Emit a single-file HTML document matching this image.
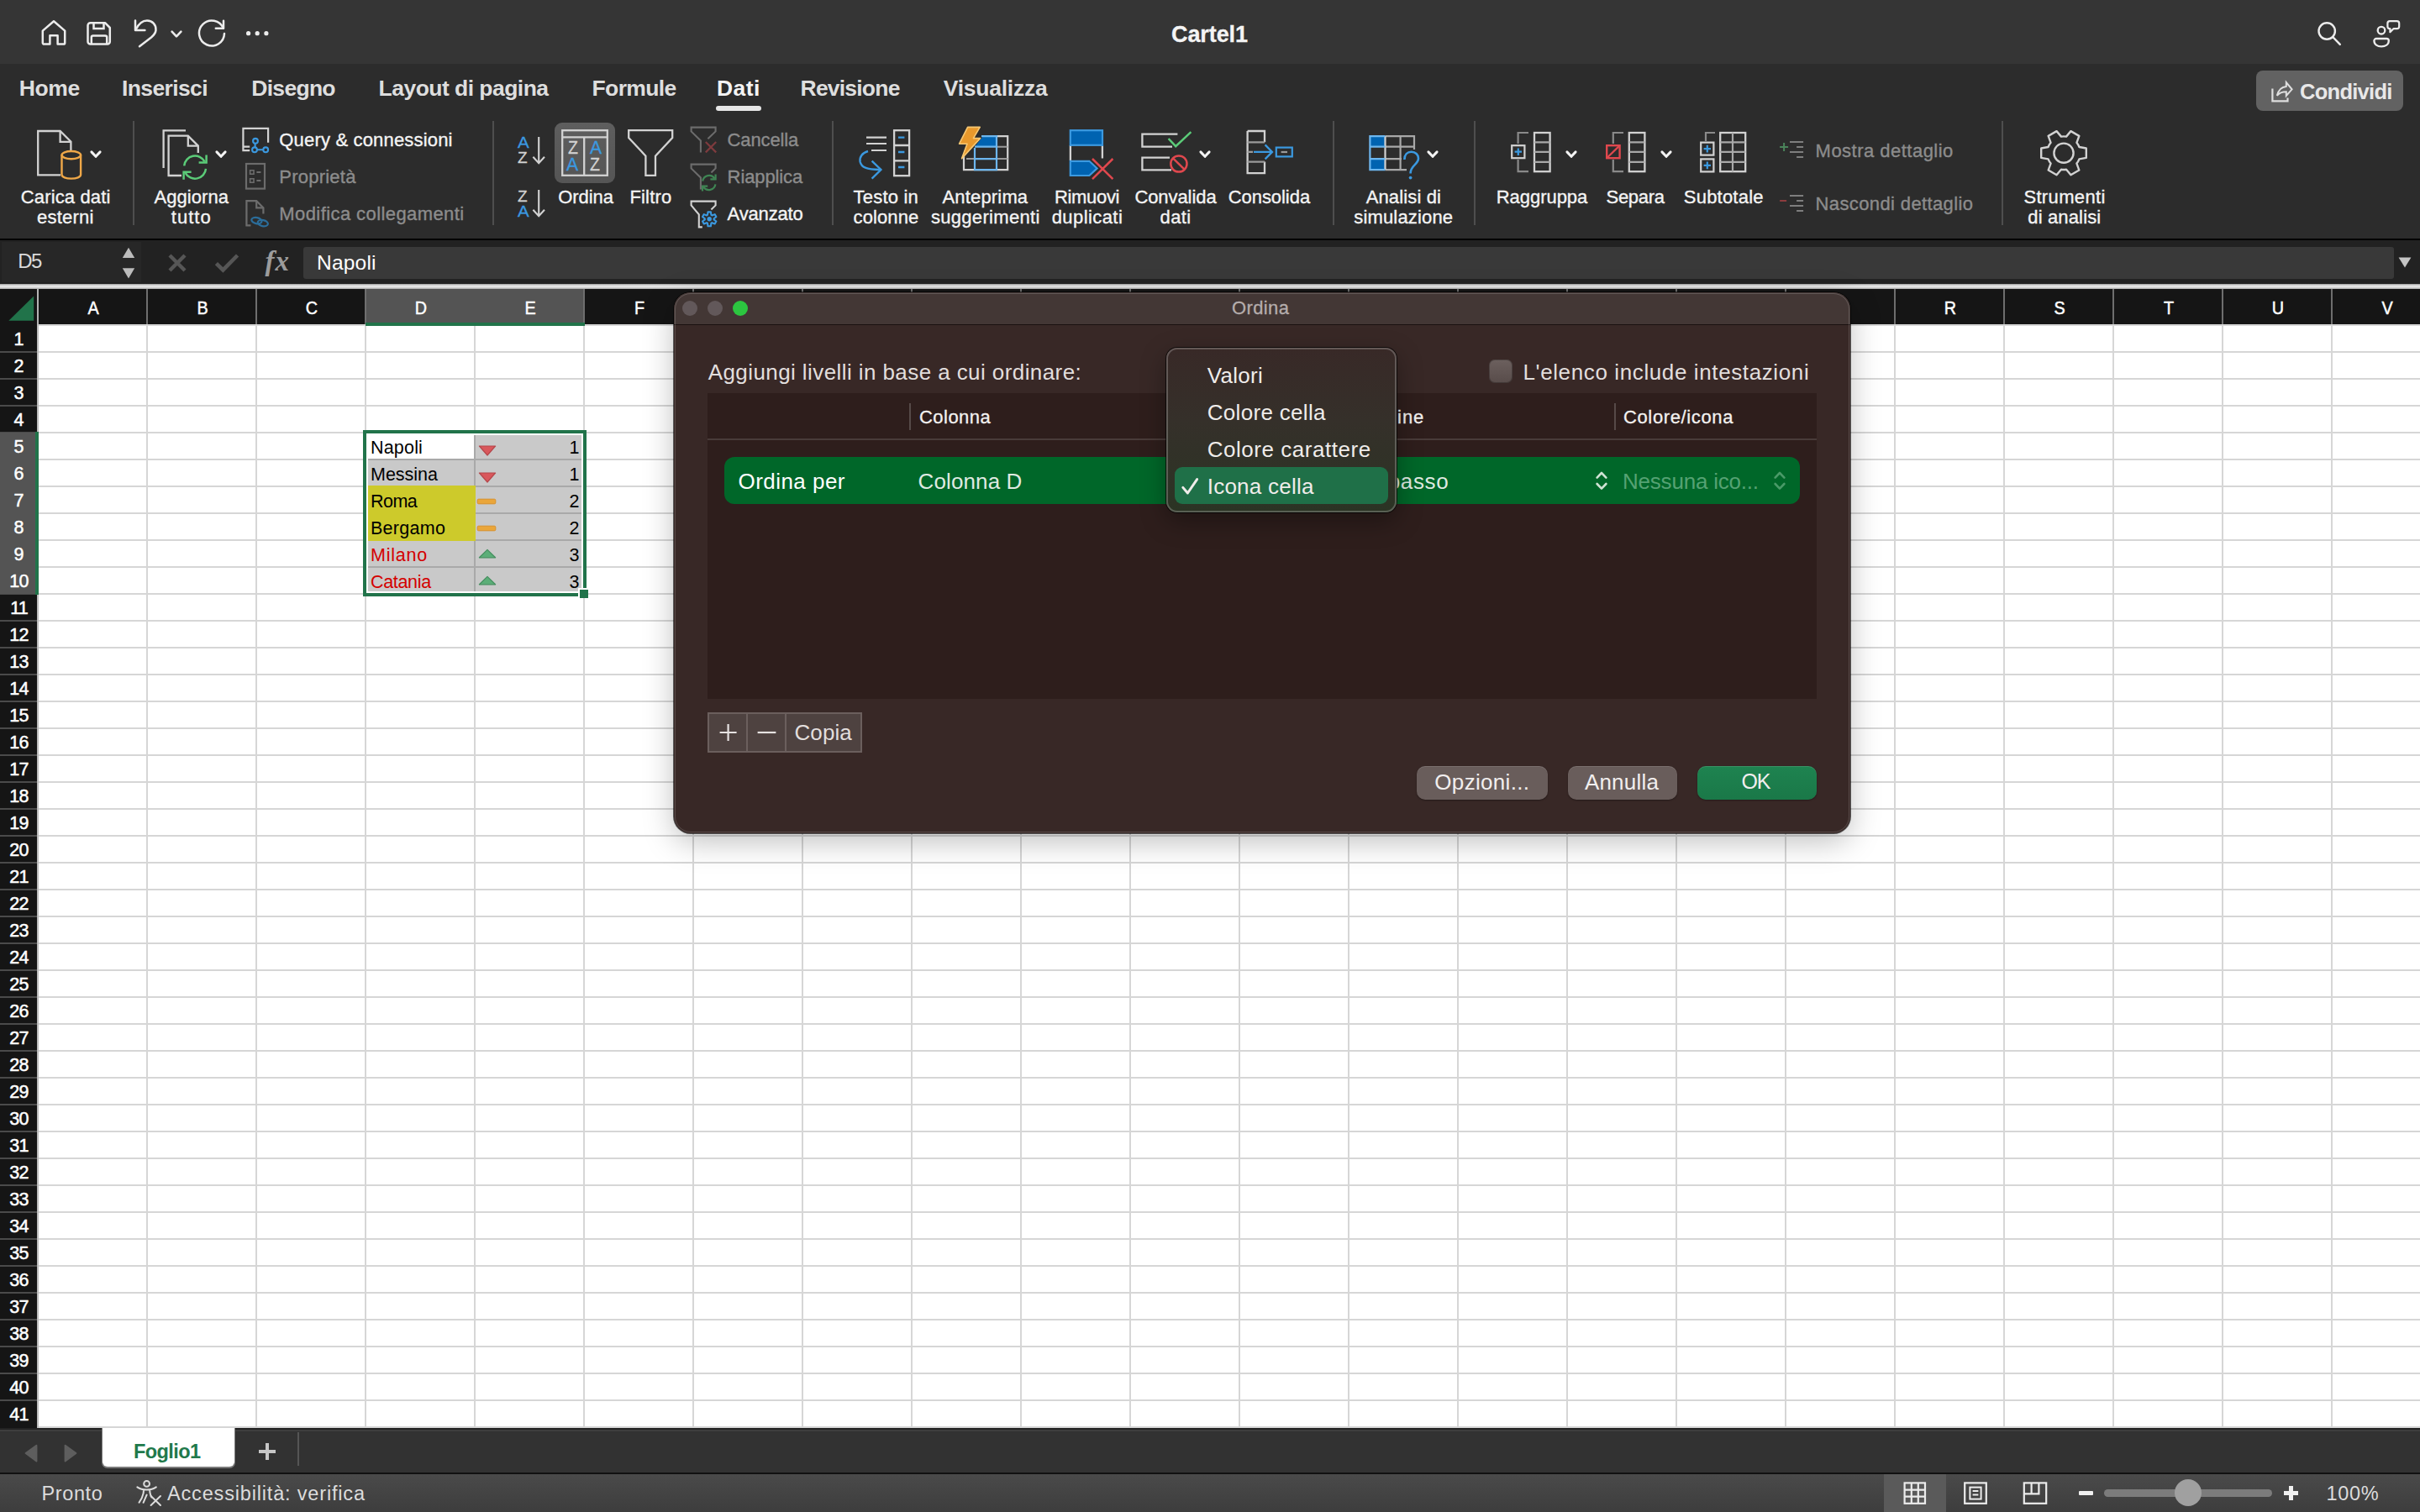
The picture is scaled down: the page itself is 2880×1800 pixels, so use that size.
<!DOCTYPE html>
<html lang="it"><head><meta charset="utf-8"><title>Cartel1</title><style>
html,body{margin:0;padding:0;background:#2c2c2c;}
body{width:2880px;height:1800px;position:relative;overflow:hidden;font-family:"Liberation Sans",sans-serif;}
.b{position:absolute;display:block;}
.t{position:absolute;white-space:nowrap;margin:0;padding:0;font-family:"Liberation Sans",sans-serif;font-weight:400;}
.sf{font-family:"Liberation Serif",serif;}
</style></head>
<body>
<!-- part1 -->
<div class="b" style="left:0px;top:0px;width:2880px;height:76px;background:#353535;"></div>
<div class="b" style="left:0px;top:76px;width:2880px;height:208px;background:#2c2c2c;"></div>
<svg class="b" style="left:48px;top:22px;" width="32" height="34" viewBox="0 0 32 34" fill="none"><path d="M2.8 14.6 L16 3.2 L29.2 14.6 V29 a1.6 1.6 0 0 1 -1.6 1.6 H20.6 V20.2 H11.4 V30.6 H4.4 a1.6 1.6 0 0 1 -1.6 -1.6 Z" stroke="#ececec" stroke-width="2.5" stroke-linejoin="round"/></svg>
<svg class="b" style="left:102px;top:24px;" width="32" height="32" viewBox="0 0 32 32" fill="none"><path d="M5.5 3.2 H23 L28.8 9 V25.5 a3 3 0 0 1 -3 3 H5.5 a3 3 0 0 1 -3 -3 V6.2 a3 3 0 0 1 3 -3 Z" stroke="#ececec" stroke-width="2.5" stroke-linejoin="round"/><path d="M9.5 3.5 V10 H21.5 V3.5" stroke="#ececec" stroke-width="2.5"/><path d="M6.8 28 V20.5 a2 2 0 0 1 2 -2 H23.2 a2 2 0 0 1 2 2 V28" stroke="#ececec" stroke-width="2.5"/></svg>
<svg class="b" style="left:156px;top:20px;" width="36" height="40" viewBox="0 0 36 40" fill="none"><path d="M5 4.6 V16 H16.4" stroke="#ececec" stroke-width="2.5" stroke-linecap="round" stroke-linejoin="round"/><path d="M5.6 15.2 C9 8.5 14 4.6 19 4.6 C25.5 4.6 30 9.5 29.5 16 C29 20 27 22 24 24.5 L10 35.2" stroke="#ececec" stroke-width="2.5" stroke-linecap="round"/></svg>
<svg class="b" style="left:202px;top:34px;" width="16" height="14" viewBox="0 0 16 14" fill="none"><path d="M2.6 3.6 L8 9.4 L13.4 3.6" stroke="#ececec" stroke-width="2.6" stroke-linecap="round" stroke-linejoin="round"/></svg>
<svg class="b" style="left:232px;top:20px;" width="40" height="40" viewBox="0 0 40 40" fill="none"><path d="M33.8 13.6 A15 15 0 1 0 35 20" stroke="#ececec" stroke-width="2.5" stroke-linecap="round"/><path d="M34 4.8 V13.8 H24.8" stroke="#ececec" stroke-width="2.5" stroke-linecap="round" stroke-linejoin="round"/></svg>
<svg class="b" style="left:290px;top:34px;" width="32" height="12" viewBox="0 0 32 12" fill="none"><circle cx="5.6" cy="5.7" r="2.6" fill="#ececec"/><circle cx="16.2" cy="5.7" r="2.6" fill="#ececec"/><circle cx="26.9" cy="5.7" r="2.6" fill="#ececec"/></svg>
<div id="t1" class="t" style="top:27.64px;font-size:27px;line-height:27px;color:#f4f4f4;font-weight:700;letter-spacing:-0.085px;left:839.46px;width:1200px;text-align:center;-webkit-text-stroke:0.3px currentColor;"><span>Cartel1</span></div>
<svg class="b" style="left:2754px;top:22px;" width="36" height="36" viewBox="0 0 36 36" fill="none"><circle cx="15.2" cy="15" r="9.7" stroke="#ececec" stroke-width="2.4"/><path d="M22.2 22 L30.8 30.8" stroke="#ececec" stroke-width="2.5" stroke-linecap="round"/></svg>
<svg class="b" style="left:2820px;top:20px;" width="40" height="40" viewBox="0 0 40 40" fill="none"><circle cx="14" cy="16.2" r="4.3" stroke="#ececec" stroke-width="2.3"/><path d="M5.4 28.6 a2.6 2.6 0 0 1 2.6 -2.6 H20.2 a2.6 2.6 0 0 1 2.6 2.6 c0 4.4 -3.9 6.8 -8.7 6.8 c-4.8 0 -8.7 -2.4 -8.7 -6.8 Z" stroke="#ececec" stroke-width="2.3"/><path d="M24 5.2 H32.6 a2.6 2.6 0 0 1 2.6 2.6 V11.6 a2.6 2.6 0 0 1 -2.6 2.6 H28.4 L24.4 18.2 V14.2 H24 a2.6 2.6 0 0 1 -2.6 -2.6 V7.8 a2.6 2.6 0 0 1 2.6 -2.6 Z" stroke="#ececec" stroke-width="2.2" stroke-linejoin="round"/></svg>
<div id="t2" class="t" style="top:91.77px;font-size:26.5px;line-height:26.5px;color:#dedede;font-weight:700;letter-spacing:-0.411px;left:22.80px;"><span>Home</span></div>
<div id="t3" class="t" style="top:91.77px;font-size:26.5px;line-height:26.5px;color:#dedede;font-weight:700;letter-spacing:-0.630px;left:145.00px;"><span>Inserisci</span></div>
<div id="t4" class="t" style="top:91.77px;font-size:26.5px;line-height:26.5px;color:#dedede;font-weight:700;letter-spacing:-0.715px;left:299.30px;"><span>Disegno</span></div>
<div id="t5" class="t" style="top:91.77px;font-size:26.5px;line-height:26.5px;color:#dedede;font-weight:700;letter-spacing:-0.538px;left:450.60px;"><span>Layout di pagina</span></div>
<div id="t6" class="t" style="top:91.77px;font-size:26.5px;line-height:26.5px;color:#dedede;font-weight:700;letter-spacing:-0.623px;left:704.50px;"><span>Formule</span></div>
<div id="t7" class="t" style="top:91.77px;font-size:26.5px;line-height:26.5px;color:#dedede;font-weight:700;letter-spacing:-0.800px;left:952.60px;"><span>Revisione</span></div>
<div id="t8" class="t" style="top:91.77px;font-size:26.5px;line-height:26.5px;color:#dedede;font-weight:700;letter-spacing:-0.252px;left:1122.80px;"><span>Visualizza</span></div>
<div id="t9" class="t" style="top:91.77px;font-size:26.5px;line-height:26.5px;color:#f4f4f4;font-weight:700;letter-spacing:0.407px;left:853.00px;"><span>Dati</span></div>
<div class="b" style="left:852px;top:126px;width:54px;height:6px;background:#e6e6e6;border-radius:3px;"></div>
<div class="b" style="left:2685px;top:84px;width:175px;height:48px;background:#626262;border-radius:8px;"></div>
<svg class="b" style="left:2699px;top:92.5px;" width="34" height="32" viewBox="0 0 34 32" fill="none"><path d="M5.4 12.6 V27.4 H23.5 V23.4" stroke="#dedede" stroke-width="2.2"/><path d="M10.8 20.8 C12.4 14.4 16 10.4 21.8 9.9 V5 L28.6 13.3 L21.8 21 V16.2 C17.2 16.2 13.6 17.4 10.8 20.8 Z" stroke="#dedede" stroke-width="2" stroke-linejoin="miter"/></svg>
<div id="t10" class="t" style="top:96.81px;font-size:25.5px;line-height:25.5px;color:#e8e8e8;font-weight:700;letter-spacing:-0.725px;left:2737.00px;"><span>Condividi</span></div>
<!-- part2a -->
<svg class="b" style="left:40px;top:150px;" width="64" height="68" viewBox="0 0 64 68" fill="none"><path d="M32 58.4 H5.2 V6 H31.6 L44.4 18.8 V29" stroke="#d2d2d2" stroke-width="2.3"/><path d="M31.6 6 V18.8 H44.4" stroke="#d2d2d2" stroke-width="2.3"/><ellipse cx="44.8" cy="34.6" rx="11.3" ry="4.6" stroke="#f0a848" stroke-width="2.4"/><path d="M33.5 34.6 V58 C33.5 60.6 38.5 62.6 44.8 62.6 C51.1 62.6 56.1 60.6 56.1 58 V34.6" stroke="#f0a848" stroke-width="2.4"/></svg>
<svg class="b" style="left:106px;top:176.5px;" width="16" height="14" viewBox="0 0 16 14" fill="none"><path d="M2.9 3.9 L8 9.3 L13.1 3.9" stroke="#f4f4f4" stroke-width="3" stroke-linecap="round" stroke-linejoin="round"/></svg>
<div id="t11" class="t" style="top:223.88px;font-size:22px;line-height:22px;color:#f4f4f4;letter-spacing:0.137px;left:24.80px;-webkit-text-stroke:0.35px currentColor;"><span>Carica dati</span></div>
<div id="t12" class="t" style="top:248.28px;font-size:22px;line-height:22px;color:#f4f4f4;letter-spacing:0.224px;left:44.10px;-webkit-text-stroke:0.35px currentColor;"><span>esterni</span></div>
<div class="b" style="left:158px;top:144px;width:2px;height:124px;background:#4e4e4e;"></div>
<svg class="b" style="left:190px;top:150px;" width="64" height="68" viewBox="0 0 64 68" fill="none"><path d="M4.6 50 V5.4 H31" stroke="#d2d2d2" stroke-width="2.3"/><path d="M26 59 H10.6 V11.6 H33.8 L45.8 23.6 V32" stroke="#d2d2d2" stroke-width="2.3"/><path d="M33.8 11.6 V23.6 H45.8" stroke="#d2d2d2" stroke-width="2.3"/><path d="M29.2 47.4 A13 13 0 0 1 53.6 42.4" stroke="#5bcb78" stroke-width="2.5"/><path d="M55.6 34.4 V43.4 H46.6" stroke="#5bcb78" stroke-width="2.5"/><path d="M55 50.8 A13 13 0 0 1 30.6 55.8" stroke="#5bcb78" stroke-width="2.5"/><path d="M28.6 63.8 V54.8 H37.6" stroke="#5bcb78" stroke-width="2.5"/></svg>
<svg class="b" style="left:254.8px;top:176.5px;" width="16" height="14" viewBox="0 0 16 14" fill="none"><path d="M2.9 3.9 L8 9.3 L13.1 3.9" stroke="#f4f4f4" stroke-width="3" stroke-linecap="round" stroke-linejoin="round"/></svg>
<div id="t13" class="t" style="top:223.88px;font-size:22px;line-height:22px;color:#f4f4f4;letter-spacing:0.058px;left:183.50px;-webkit-text-stroke:0.35px currentColor;"><span>Aggiorna</span></div>
<div id="t14" class="t" style="top:248.28px;font-size:22px;line-height:22px;color:#f4f4f4;letter-spacing:1.017px;left:203.80px;-webkit-text-stroke:0.35px currentColor;"><span>tutto</span></div>
<svg class="b" style="left:284px;top:148px;" width="40" height="38" viewBox="0 0 40 38" fill="none"><path d="M13.2 31.1 H5.4 V4.8 H35.1 V21.8 M5.4 26.6 H13.2" stroke="#d2d2d2" stroke-width="2.2"/><circle cx="20" cy="19.8" r="2.9" stroke="#3b99e0" stroke-width="2.1"/><circle cx="19" cy="30.3" r="2.9" stroke="#3b99e0" stroke-width="2.1"/><circle cx="32.2" cy="30.3" r="2.9" stroke="#3b99e0" stroke-width="2.1"/><path d="M19.6 22.8 V27.4 M22 30.3 H29.2" stroke="#3b99e0" stroke-width="2.1"/></svg>
<div id="t15" class="t" style="top:155.68px;font-size:22px;line-height:22px;color:#f4f4f4;letter-spacing:0.178px;left:332.30px;-webkit-text-stroke:0.35px currentColor;"><span>Query &amp; connessioni</span></div>
<svg class="b" style="left:290px;top:192px;" width="30" height="36" viewBox="0 0 30 36" fill="none"><rect x="3" y="3" width="22" height="29.6" stroke="#6c6c6c" stroke-width="2.2"/><rect x="7.6" y="10.8" width="4.4" height="4.4" stroke="#6c6c6c" stroke-width="1.6"/><rect x="7.6" y="20.8" width="4.4" height="4.4" stroke="#6c6c6c" stroke-width="1.6"/><path d="M15.4 13 H20.4 M15.4 23 H20.4" stroke="#6c6c6c" stroke-width="1.8"/></svg>
<div id="t16" class="t" style="top:199.58px;font-size:22px;line-height:22px;color:#8c8c8c;letter-spacing:0.226px;left:332.30px;-webkit-text-stroke:0.35px currentColor;"><span>Proprietà</span></div>
<svg class="b" style="left:290px;top:236px;" width="34" height="36" viewBox="0 0 34 36" fill="none"><path d="M8.4 32.4 H3.4 V3.2 H15.2 L23.4 11.4 V18.6" stroke="#6c6c6c" stroke-width="2.2"/><path d="M15.2 3.2 V11.4 H23.4" stroke="#6c6c6c" stroke-width="2.2"/><ellipse cx="15.4" cy="26.6" rx="6.2" ry="3.6" transform="rotate(12 15.4 26.6)" stroke="#2b6d9a" stroke-width="2.2"/><ellipse cx="22.8" cy="29.6" rx="6.2" ry="3.6" transform="rotate(12 22.8 29.6)" stroke="#2b6d9a" stroke-width="2.2"/></svg>
<div id="t17" class="t" style="top:243.68px;font-size:22px;line-height:22px;color:#8c8c8c;letter-spacing:0.417px;left:332.30px;-webkit-text-stroke:0.35px currentColor;"><span>Modifica collegamenti</span></div>
<div class="b" style="left:586px;top:144px;width:2px;height:124px;background:#4e4e4e;"></div>
<div id="t18" class="t" style="top:159.52px;font-size:19px;line-height:19px;color:#3b99e0;left:615.60px;-webkit-text-stroke:0.3px currentColor;transform-origin:0 50%;transform:scaleX(1.08);"><span>A</span></div>
<div id="t19" class="t" style="top:177.82px;font-size:19px;line-height:19px;color:#d2d2d2;left:615.90px;-webkit-text-stroke:0.3px currentColor;transform-origin:0 50%;transform:scaleX(1.0);"><span>Z</span></div>
<svg class="b" style="left:632px;top:158.6px;" width="20" height="40" viewBox="0 0 20 40" fill="none"><path d="M9.2 4 V35 M2.4 27.8 L9.2 35.2 L16 27.8" stroke="#d2d2d2" stroke-width="2.1"/></svg>
<div id="t20" class="t" style="top:223.92px;font-size:19px;line-height:19px;color:#d2d2d2;left:615.90px;-webkit-text-stroke:0.3px currentColor;transform-origin:0 50%;transform:scaleX(1.0);"><span>Z</span></div>
<div id="t21" class="t" style="top:241.72px;font-size:19px;line-height:19px;color:#3b99e0;left:615.60px;-webkit-text-stroke:0.3px currentColor;transform-origin:0 50%;transform:scaleX(1.08);"><span>A</span></div>
<svg class="b" style="left:632px;top:222.4px;" width="20" height="40" viewBox="0 0 20 40" fill="none"><path d="M9.2 4 V35 M2.4 27.8 L9.2 35.2 L16 27.8" stroke="#d2d2d2" stroke-width="2.1"/></svg>
<div class="b" style="left:660px;top:146px;width:72px;height:72px;background:linear-gradient(#5e5e5e,#555555);border-radius:9px;"></div>
<svg class="b" style="left:664px;top:150px;" width="64" height="64" viewBox="0 0 64 64" fill="none"><rect x="5.2" y="5.2" width="53.6" height="53.6" stroke="#d2d2d2" stroke-width="2.3"/><path d="M5.2 13.4 H58.8 M31.2 13.4 V58.8" stroke="#d2d2d2" stroke-width="2.3"/></svg>
<div id="t22" class="t" style="top:164.95px;font-size:22.5px;line-height:22.5px;color:#d2d2d2;left:675.90px;-webkit-text-stroke:0.3px currentColor;transform-origin:0 50%;transform:scaleX(0.87);"><span>Z</span></div>
<div id="t23" class="t" style="top:184.85px;font-size:22.5px;line-height:22.5px;color:#3b99e0;left:673.80px;-webkit-text-stroke:0.3px currentColor;transform-origin:0 50%;transform:scaleX(0.94);"><span>A</span></div>
<div id="t24" class="t" style="top:164.75px;font-size:22.5px;line-height:22.5px;color:#3b99e0;left:701.70px;-webkit-text-stroke:0.3px currentColor;transform-origin:0 50%;transform:scaleX(0.94);"><span>A</span></div>
<div id="t25" class="t" style="top:184.85px;font-size:22.5px;line-height:22.5px;color:#d2d2d2;left:701.80px;-webkit-text-stroke:0.3px currentColor;transform-origin:0 50%;transform:scaleX(0.87);"><span>Z</span></div>
<div id="t26" class="t" style="top:223.88px;font-size:22px;line-height:22px;color:#f4f4f4;letter-spacing:-0.061px;left:664.30px;-webkit-text-stroke:0.35px currentColor;"><span>Ordina</span></div>
<svg class="b" style="left:744px;top:150px;" width="62" height="64" viewBox="0 0 62 64" fill="none"><path d="M4.2 5.2 H56.2 V14 L36 35.6 V58.8 H24.4 V35.6 L4.2 14 Z" stroke="#d2d2d2" stroke-width="2.3" stroke-linejoin="miter"/></svg>
<div id="t27" class="t" style="top:223.88px;font-size:22px;line-height:22px;color:#f4f4f4;letter-spacing:0.202px;left:749.40px;-webkit-text-stroke:0.35px currentColor;"><span>Filtro</span></div>
<svg class="b" style="left:819px;top:147px;" width="38" height="38" viewBox="0 0 38 38" fill="none"><path d="M14.9 34.6 V20.4 L3.6 9.4 V4.6 H32.6 V9.4 L23.4 18.2" stroke="#6c6c6c" stroke-width="2.1"/><path d="M20.8 22 L33.2 34.4 M33.2 22 L20.8 34.4" stroke="#7e3b3e" stroke-width="2.2"/></svg>
<div id="t28" class="t" style="top:155.68px;font-size:22px;line-height:22px;color:#8c8c8c;letter-spacing:-0.135px;left:865.60px;-webkit-text-stroke:0.35px currentColor;"><span>Cancella</span></div>
<svg class="b" style="left:819px;top:191px;" width="38" height="38" viewBox="0 0 38 38" fill="none"><path d="M14.9 34.6 V20.4 L3.6 9.4 V4.6 H32.6 V9.4 L27.4 14.4" stroke="#6c6c6c" stroke-width="2.1"/><path d="M17.2 24.6 A7.8 7.8 0 0 1 31.4 21.4" stroke="#3f8554" stroke-width="2.2"/><path d="M32.6 16.4 V22.4 H26.4" stroke="#3f8554" stroke-width="2.2"/><path d="M32.4 28.4 A7.8 7.8 0 0 1 18.2 31.6" stroke="#3f8554" stroke-width="2.2"/><path d="M17 36.6 V30.6 H23.2" stroke="#3f8554" stroke-width="2.2"/></svg>
<div id="t29" class="t" style="top:199.58px;font-size:22px;line-height:22px;color:#8c8c8c;letter-spacing:-0.106px;left:865.60px;-webkit-text-stroke:0.35px currentColor;"><span>Riapplica</span></div>
<svg class="b" style="left:819px;top:235px;" width="38" height="38" viewBox="0 0 38 38" fill="none"><path d="M16.8 35.4 H12.8 V20.4 L3.6 9.4 V4.6 H32.6 V9.4 L27.4 14.4" stroke="#d2d2d2" stroke-width="2.1"/><path d="M23.00 20.87 L23.49 17.37 L26.91 17.37 L27.40 20.87 A5.40 5.40 0 0 1 28.37 21.43 L31.65 20.11 L33.35 23.07 L30.57 25.24 A5.40 5.40 0 0 1 30.57 26.36 L33.35 28.53 L31.65 31.49 L28.37 30.17 A5.40 5.40 0 0 1 27.40 30.73 L26.91 34.23 L23.49 34.23 L23.00 30.73 A5.40 5.40 0 0 1 22.03 30.17 L18.75 31.49 L17.05 28.53 L19.83 26.36 A5.40 5.40 0 0 1 19.83 25.24 L17.05 23.07 L18.75 20.11 L22.03 21.43 A5.40 5.40 0 0 1 23.00 20.87 Z" stroke="#3b99e0" stroke-width="2.1" stroke-linejoin="round"/><circle cx="25.2" cy="25.8" r="2.7" fill="#3b99e0"/></svg>
<div id="t30" class="t" style="top:243.68px;font-size:22px;line-height:22px;color:#f4f4f4;letter-spacing:-0.178px;left:865.60px;-webkit-text-stroke:0.35px currentColor;"><span>Avanzato</span></div>
<div class="b" style="left:990px;top:144px;width:2px;height:124px;background:#4e4e4e;"></div>
<!-- part2b -->
<svg class="b" style="left:1018px;top:150px;" width="70" height="68" viewBox="0 0 70 68" fill="none"><path d="M13 13.6 H37 M13 21 H37 M19 29 H37" stroke="#d2d2d2" stroke-width="2.2"/><path d="M15 30 C8 32 4.6 37 5.6 42.5 C7 49 13 52 29 52" stroke="#3b99e0" stroke-width="2.4"/><path d="M19.6 41.6 L30.4 52 L19.6 62.6" stroke="#3b99e0" stroke-width="2.4"/><rect x="46.1" y="5.2" width="18" height="54" stroke="#d2d2d2" stroke-width="2.3"/><path d="M46.1 23 H64.1 M46.1 41.4 H64.1" stroke="#d2d2d2" stroke-width="2.3"/><path d="M51 13.6 H58.4 M51 31 H58.4 M51 49 H58.4" stroke="#3b99e0" stroke-width="2.3"/></svg>
<div id="t31" class="t" style="top:223.88px;font-size:22px;line-height:22px;color:#f4f4f4;letter-spacing:0.182px;left:1015.60px;-webkit-text-stroke:0.35px currentColor;"><span>Testo in</span></div>
<div id="t32" class="t" style="top:248.28px;font-size:22px;line-height:22px;color:#f4f4f4;letter-spacing:0.096px;left:1015.60px;-webkit-text-stroke:0.35px currentColor;"><span>colonne</span></div>
<svg class="b" style="left:1138px;top:146px;" width="68" height="62" viewBox="0 0 68 62" fill="none"><path d="M38.0 16.2 H61.2 V56.2 H9.0 V40.0" stroke="#d2d2d2" stroke-width="2.2"/><path d="M48.0 28.7 H61.2 M12.0 43.1 H61.2" stroke="#9a9a9a" stroke-width="2"/><path d="M48.0 16.0 V56.2" stroke="#d2d2d2" stroke-width="2"/><path d="M32.0 16.0 H48.0 V28.7 H22.0 Z" fill="#0063b1"/><path d="M30.0 16.2 H48.0 V56.2 H22.0 V30.0 M22.0 28.7 H48.0 M22.0 43.1 H48.0" stroke="#6db6ee" stroke-width="2.2"/><path d="M13.6 5.4 L28.2 5.4 L20.4 18.6 L28.6 18.6 L6.6 42.6 L13.0 25.2 L3.6 25.2 Z" fill="#e8992c" stroke="#f7c873" stroke-width="1.6" stroke-linejoin="round"/></svg>
<div id="t33" class="t" style="top:223.88px;font-size:22px;line-height:22px;color:#f4f4f4;letter-spacing:0.167px;left:1121.50px;-webkit-text-stroke:0.35px currentColor;"><span>Anteprima</span></div>
<div id="t34" class="t" style="top:248.28px;font-size:22px;line-height:22px;color:#f4f4f4;letter-spacing:0.316px;left:1107.90px;-webkit-text-stroke:0.35px currentColor;"><span>suggerimenti</span></div>
<svg class="b" style="left:1268px;top:150px;" width="62" height="68" viewBox="0 0 62 68" fill="none"><path d="M5.9 23.0 V41.0 M43.9 23.0 V38.4" stroke="#d2d2d2" stroke-width="2.3"/><rect x="5.8" y="5.2" width="38.2" height="17.6" fill="#0063b1" stroke="#3b99e0" stroke-width="2.2"/><path d="M5.8 41.8 H28.4 L37.6 50.4 L28.4 59.0 H5.8 Z" fill="#0063b1" stroke="#3b99e0" stroke-width="2.2"/><path d="M32.0 39.0 L56.4 63.2 M56.4 39.0 L32.0 63.2" stroke="#e0484e" stroke-width="2.5"/></svg>
<div id="t35" class="t" style="top:223.88px;font-size:22px;line-height:22px;color:#f4f4f4;letter-spacing:-0.317px;left:1254.90px;-webkit-text-stroke:0.35px currentColor;"><span>Rimuovi</span></div>
<div id="t36" class="t" style="top:248.28px;font-size:22px;line-height:22px;color:#f4f4f4;letter-spacing:0.420px;left:1251.70px;-webkit-text-stroke:0.35px currentColor;"><span>duplicati</span></div>
<svg class="b" style="left:1354px;top:152px;" width="70" height="60" viewBox="0 0 70 60" fill="none"><path d="M47.4 7.6 H5.4 V22.6 H41.0" stroke="#d2d2d2" stroke-width="2.3"/><path d="M38.0 35.6 H5.4 V50.4 H40.0" stroke="#d2d2d2" stroke-width="2.3"/><path d="M36.6 13.0 L45.2 22.2 L63.4 5.2" stroke="#5bcb78" stroke-width="2.5"/><circle cx="48.9" cy="43.0" r="9.6" stroke="#e0484e" stroke-width="2.5"/><path d="M42.0 36.4 L55.8 49.8" stroke="#e0484e" stroke-width="2.5"/></svg>
<svg class="b" style="left:1425.8px;top:176.5px;" width="16" height="14" viewBox="0 0 16 14" fill="none"><path d="M2.9 3.9 L8 9.3 L13.1 3.9" stroke="#f4f4f4" stroke-width="3" stroke-linecap="round" stroke-linejoin="round"/></svg>
<div id="t37" class="t" style="top:223.88px;font-size:22px;line-height:22px;color:#f4f4f4;letter-spacing:-0.075px;left:1350.40px;-webkit-text-stroke:0.35px currentColor;"><span>Convalida</span></div>
<div id="t38" class="t" style="top:248.28px;font-size:22px;line-height:22px;color:#f4f4f4;letter-spacing:0.351px;left:1380.60px;-webkit-text-stroke:0.35px currentColor;"><span>dati</span></div>
<svg class="b" style="left:1480px;top:150px;" width="64" height="62" viewBox="0 0 64 62" fill="none"><path d="M4.6 6.0 H25.0 V19.3 M25.0 42.6 V56.2 H4.6 V6.0" stroke="#d2d2d2" stroke-width="2.3"/><path d="M4.6 19.3 H25.0 M4.6 42.6 H25.0 M4.6 30.9 H11.0" stroke="#9a9a9a" stroke-width="2.2"/><path d="M12.0 30.9 H33.6 M25.6 22.4 L34.0 30.9 L25.6 39.4" stroke="#3b99e0" stroke-width="2.3"/><rect x="38.8" y="25.6" width="19" height="10.8" stroke="#3b99e0" stroke-width="2.2"/><path d="M44.6 31.0 H52.0" stroke="#9a9a9a" stroke-width="2.2"/></svg>
<div id="t39" class="t" style="top:223.88px;font-size:22px;line-height:22px;color:#f4f4f4;letter-spacing:-0.052px;left:1461.70px;-webkit-text-stroke:0.35px currentColor;"><span>Consolida</span></div>
<div class="b" style="left:1586px;top:144px;width:2px;height:124px;background:#4e4e4e;"></div>
<svg class="b" style="left:1626px;top:156px;" width="68" height="62" viewBox="0 0 68 62" fill="none"><rect x="4.4" y="6.0" width="18" height="12.6" fill="#0063b1"/><rect x="4.4" y="33.2" width="18" height="13" fill="#0063b1"/><path d="M22.5 6.1 H57.0 V22.0 M22.5 46.2 H48.0 M40.6 6.0 V46.2 M22.5 18.7 H57.0 M22.5 33.1 H42.0" stroke="#a8a8a8" stroke-width="2.2"/><path d="M22.5 6.0 V46.2" stroke="#d2d2d2" stroke-width="2.2"/><path d="M4.4 6.1 H22.5 M4.4 18.7 H22.5 M4.4 33.1 H22.5 M4.4 46.2 H22.5 M4.4 5.0 V47.3" stroke="#6db6ee" stroke-width="2.2"/><path d="M45.4 34.0 C45.4 28.0 49.0 24.8 53.6 24.8 C58.6 24.8 62.0 28.2 62.0 32.6 C62.0 40.0 52.6 40.6 52.6 50.4" stroke="#3b99e0" stroke-width="2.6"/><circle cx="52.6" cy="55.6" r="1.9" fill="#3b99e0"/></svg>
<svg class="b" style="left:1697px;top:176.5px;" width="16" height="14" viewBox="0 0 16 14" fill="none"><path d="M2.9 3.9 L8 9.3 L13.1 3.9" stroke="#f4f4f4" stroke-width="3" stroke-linecap="round" stroke-linejoin="round"/></svg>
<div id="t40" class="t" style="top:223.88px;font-size:22px;line-height:22px;color:#f4f4f4;letter-spacing:0.131px;left:1625.70px;-webkit-text-stroke:0.35px currentColor;"><span>Analisi di</span></div>
<div id="t41" class="t" style="top:248.28px;font-size:22px;line-height:22px;color:#f4f4f4;letter-spacing:0.155px;left:1611.30px;-webkit-text-stroke:0.35px currentColor;"><span>simulazione</span></div>
<div class="b" style="left:1754px;top:144px;width:2px;height:124px;background:#4e4e4e;"></div>
<svg class="b" style="left:1794px;top:152px;" width="56" height="58" viewBox="0 0 56 58" fill="none"><rect x="32.0" y="6.0" width="18.6" height="46.2" stroke="#d2d2d2" stroke-width="2.3"/><path d="M32.0 17.3 H50.6 M32.0 28.9 H50.6 M32.0 40.8 H50.6" stroke="#a8a8a8" stroke-width="2.2"/><path d="M25.0 6.0 H12.6 V19.0 M12.6 38.0 V52.2 H25.0" stroke="#8a8a8a" stroke-width="2.2"/><rect x="5.2" y="21.2" width="15.2" height="15" stroke="#d2d2d2" stroke-width="2.2"/><path d="M8.6 28.7 H17.0 M12.8 24.4 V33.0" stroke="#3b99e0" stroke-width="2.2"/></svg>
<svg class="b" style="left:1862px;top:176.5px;" width="16" height="14" viewBox="0 0 16 14" fill="none"><path d="M2.9 3.9 L8 9.3 L13.1 3.9" stroke="#f4f4f4" stroke-width="3" stroke-linecap="round" stroke-linejoin="round"/></svg>
<div id="t42" class="t" style="top:223.88px;font-size:22px;line-height:22px;color:#f4f4f4;letter-spacing:-0.031px;left:1780.70px;-webkit-text-stroke:0.35px currentColor;"><span>Raggruppa</span></div>
<svg class="b" style="left:1907px;top:152px;" width="56" height="58" viewBox="0 0 56 58" fill="none"><rect x="31.8" y="6.0" width="18.6" height="46.2" stroke="#d2d2d2" stroke-width="2.3"/><path d="M31.8 17.3 H50.4 M31.8 28.9 H50.4 M31.8 40.8 H50.4" stroke="#a8a8a8" stroke-width="2.2"/><path d="M25.0 6.0 H12.8 V19.0 M12.8 38.0 V52.2 H25.0" stroke="#8a8a8a" stroke-width="2.2"/><rect x="5.2" y="21.2" width="15.4" height="15" stroke="#e0484e" stroke-width="2.4"/><path d="M5.6 35.8 L20.2 21.6" stroke="#e0484e" stroke-width="2.2"/></svg>
<svg class="b" style="left:1975px;top:176.5px;" width="16" height="14" viewBox="0 0 16 14" fill="none"><path d="M2.9 3.9 L8 9.3 L13.1 3.9" stroke="#f4f4f4" stroke-width="3" stroke-linecap="round" stroke-linejoin="round"/></svg>
<div id="t43" class="t" style="top:223.88px;font-size:22px;line-height:22px;color:#f4f4f4;letter-spacing:-0.319px;left:1911.60px;-webkit-text-stroke:0.35px currentColor;"><span>Separa</span></div>
<svg class="b" style="left:2019px;top:152px;" width="64" height="58" viewBox="0 0 64 58" fill="none"><rect x="28.2" y="6.0" width="30" height="46.2" stroke="#d2d2d2" stroke-width="2.3"/><path d="M28.2 17.3 H58.2 M28.2 28.9 H58.2 M28.2 40.8 H58.2 M43.0 6.0 V52.2" stroke="#a8a8a8" stroke-width="2.2"/><path d="M22.0 6.0 H11.0 V16.0" stroke="#8a8a8a" stroke-width="2.2"/><rect x="5.2" y="17.6" width="15.2" height="15" stroke="#d2d2d2" stroke-width="2.2"/><rect x="5.2" y="37.4" width="15.2" height="15" stroke="#d2d2d2" stroke-width="2.2"/><path d="M8.6 25.1 H17.0 M12.8 20.8 V29.4 M8.6 44.9 H17.0 M12.8 40.6 V49.2" stroke="#3b99e0" stroke-width="2.2"/></svg>
<div id="t44" class="t" style="top:223.88px;font-size:22px;line-height:22px;color:#f4f4f4;letter-spacing:0.215px;left:2003.80px;-webkit-text-stroke:0.35px currentColor;"><span>Subtotale</span></div>
<svg class="b" style="left:2114px;top:164px;" width="36" height="28" viewBox="0 0 36 28" fill="none"><path d="M16 5 H32.1 M24.1 11 H32.1 M16 17 H32.1 M24.1 23 H32.1" stroke="#7e7e7e" stroke-width="2"/><path d="M4.1 11 H14.1 M9.1 6 V16" stroke="#4a835a" stroke-width="2"/></svg>
<div id="t45" class="t" style="top:168.58px;font-size:22px;line-height:22px;color:#8c8c8c;letter-spacing:0.481px;left:2160.60px;-webkit-text-stroke:0.35px currentColor;"><span>Mostra dettaglio</span></div>
<svg class="b" style="left:2114px;top:228px;" width="36" height="28" viewBox="0 0 36 28" fill="none"><path d="M16 5 H32.1 M24.1 11 H32.1 M16 17 H32.1 M24.1 23 H32.1" stroke="#7e7e7e" stroke-width="2"/><path d="M4.1 11 H12.1" stroke="#8c3c3e" stroke-width="2"/></svg>
<div id="t46" class="t" style="top:232.08px;font-size:22px;line-height:22px;color:#8c8c8c;letter-spacing:0.376px;left:2160.60px;-webkit-text-stroke:0.35px currentColor;"><span>Nascondi dettaglio</span></div>
<div class="b" style="left:2382px;top:144px;width:2px;height:124px;background:#4e4e4e;"></div>
<svg class="b" style="left:2424px;top:150px;" width="64" height="64" viewBox="0 0 64 64" fill="none"><path d="M50.46 25.04 L58.80 26.49 L58.80 37.91 L50.46 39.36 A19.80 19.80 0 0 1 47.43 44.61 L50.35 52.55 L40.45 58.26 L35.03 51.77 A19.80 19.80 0 0 1 28.97 51.77 L23.55 58.26 L13.65 52.55 L16.57 44.61 A19.80 19.80 0 0 1 13.54 39.36 L5.20 37.91 L5.20 26.49 L13.54 25.04 A19.80 19.80 0 0 1 16.57 19.79 L13.65 11.85 L23.55 6.14 L28.97 12.63 A19.80 19.80 0 0 1 35.03 12.63 L40.45 6.14 L50.35 11.85 L47.43 19.79 A19.80 19.80 0 0 1 50.46 25.04 Z" stroke="#d2d2d2" stroke-width="2.4" stroke-linejoin="round"/><circle cx="32" cy="32.2" r="11.6" stroke="#d2d2d2" stroke-width="2.4"/></svg>
<div id="t47" class="t" style="top:223.88px;font-size:22px;line-height:22px;color:#f4f4f4;letter-spacing:0.347px;left:2408.40px;-webkit-text-stroke:0.35px currentColor;"><span>Strumenti</span></div>
<div id="t48" class="t" style="top:248.28px;font-size:22px;line-height:22px;color:#f4f4f4;letter-spacing:0.145px;left:2413.30px;-webkit-text-stroke:0.35px currentColor;"><span>di analisi</span></div>
<!-- part3 -->
<div class="b" style="left:0px;top:284px;width:2880px;height:2px;background:#000;"></div>
<div class="b" style="left:0px;top:286px;width:2880px;height:52px;background:#222222;"></div>
<div class="b" style="left:2px;top:288px;width:166px;height:48px;background:#272727;"></div>
<div id="t49" class="t" style="top:299.28px;font-size:24px;line-height:24px;color:#dadada;letter-spacing:-1.595px;left:21.30px;"><span>D5</span></div>
<svg class="b" style="left:144px;top:292px;" width="18" height="42" viewBox="0 0 18 42" fill="none"><path d="M1.8 15 L9 2.8 L16.2 15 Z M1.8 27.2 L9 39.4 L16.2 27.2 Z" fill="#bcbcbc"/></svg>
<svg class="b" style="left:198px;top:300px;" width="26" height="26" viewBox="0 0 26 26" fill="none"><path d="M4 4 L22 22 M22 4 L4 22" stroke="#565656" stroke-width="4.4"/></svg>
<svg class="b" style="left:254px;top:300px;" width="32" height="26" viewBox="0 0 32 26" fill="none"><path d="M3.4 13.6 L11.4 21.4 L28.6 4" stroke="#565656" stroke-width="4.6"/></svg>
<div id="t50" class="t sf" style="top:294.96px;font-size:33px;line-height:33px;color:#9c9c9c;font-weight:700;font-style:italic;letter-spacing:1.000px;left:315.50px;"><span>fx</span></div>
<div class="b" style="left:361px;top:294px;width:2488px;height:38px;background:#393939;border-radius:3px;"></div>
<div id="t51" class="t" style="top:301.26px;font-size:24.5px;line-height:24.5px;color:#ffffff;letter-spacing:0.206px;left:377.00px;"><span>Napoli</span></div>
<svg class="b" style="left:2852px;top:302px;" width="20" height="20" viewBox="0 0 20 20" fill="none"><path d="M2.6 4.4 H17.4 L10 16.6 Z" fill="#c4c4c4"/></svg>
<div class="b" style="left:0px;top:338px;width:2880px;height:6px;background:linear-gradient(#9a9a9a,#e4e4e4 35%,#e4e4e4 65%,#a6a6a6);"></div>
<div class="b" style="left:0px;top:344px;width:2880px;height:42px;background:#151515;"></div>
<div class="b" style="left:435px;top:344px;width:260px;height:40px;background:#545454;"></div>
<svg class="b" style="left:8px;top:350px;" width="36" height="34" viewBox="0 0 36 34" fill="none"><path d="M32.2 2.4 V31.8 H2.4 Z" fill="#21734a"/></svg>
<div id="t52" class="t" style="top:355.75px;font-size:22.5px;line-height:22.5px;color:#ffffff;left:-489.50px;width:1200px;text-align:center;-webkit-text-stroke:0.5px #fff;transform:scaleX(0.88);"><span>A</span></div>
<div id="t53" class="t" style="top:355.75px;font-size:22.5px;line-height:22.5px;color:#ffffff;left:-359.50px;width:1200px;text-align:center;-webkit-text-stroke:0.5px #fff;transform:scaleX(0.88);"><span>B</span></div>
<div class="b" style="left:174px;top:344px;width:2px;height:42px;background:#6e6e6e;"></div>
<div id="t54" class="t" style="top:355.75px;font-size:22.5px;line-height:22.5px;color:#ffffff;left:-229.50px;width:1200px;text-align:center;-webkit-text-stroke:0.5px #fff;transform:scaleX(0.88);"><span>C</span></div>
<div class="b" style="left:304px;top:344px;width:2px;height:42px;background:#6e6e6e;"></div>
<div id="t55" class="t" style="top:355.75px;font-size:22.5px;line-height:22.5px;color:#ffffff;left:-99.50px;width:1200px;text-align:center;-webkit-text-stroke:0.5px #fff;transform:scaleX(0.88);"><span>D</span></div>
<div class="b" style="left:434px;top:344px;width:2px;height:42px;background:#6e6e6e;"></div>
<div id="t56" class="t" style="top:355.75px;font-size:22.5px;line-height:22.5px;color:#ffffff;left:30.50px;width:1200px;text-align:center;-webkit-text-stroke:0.5px #fff;transform:scaleX(0.88);"><span>E</span></div>
<div id="t57" class="t" style="top:355.75px;font-size:22.5px;line-height:22.5px;color:#ffffff;left:160.50px;width:1200px;text-align:center;-webkit-text-stroke:0.5px #fff;transform:scaleX(0.88);"><span>F</span></div>
<div class="b" style="left:694px;top:344px;width:2px;height:42px;background:#6e6e6e;"></div>
<div id="t58" class="t" style="top:355.75px;font-size:22.5px;line-height:22.5px;color:#ffffff;left:290.50px;width:1200px;text-align:center;-webkit-text-stroke:0.5px #fff;transform:scaleX(0.88);"><span>G</span></div>
<div class="b" style="left:824px;top:344px;width:2px;height:42px;background:#6e6e6e;"></div>
<div id="t59" class="t" style="top:355.75px;font-size:22.5px;line-height:22.5px;color:#ffffff;left:420.50px;width:1200px;text-align:center;-webkit-text-stroke:0.5px #fff;transform:scaleX(0.88);"><span>H</span></div>
<div class="b" style="left:954px;top:344px;width:2px;height:42px;background:#6e6e6e;"></div>
<div id="t60" class="t" style="top:355.75px;font-size:22.5px;line-height:22.5px;color:#ffffff;left:550.50px;width:1200px;text-align:center;-webkit-text-stroke:0.5px #fff;transform:scaleX(0.88);"><span>I</span></div>
<div class="b" style="left:1084px;top:344px;width:2px;height:42px;background:#6e6e6e;"></div>
<div id="t61" class="t" style="top:355.75px;font-size:22.5px;line-height:22.5px;color:#ffffff;left:680.50px;width:1200px;text-align:center;-webkit-text-stroke:0.5px #fff;transform:scaleX(0.88);"><span>J</span></div>
<div class="b" style="left:1214px;top:344px;width:2px;height:42px;background:#6e6e6e;"></div>
<div id="t62" class="t" style="top:355.75px;font-size:22.5px;line-height:22.5px;color:#ffffff;left:810.50px;width:1200px;text-align:center;-webkit-text-stroke:0.5px #fff;transform:scaleX(0.88);"><span>K</span></div>
<div class="b" style="left:1344px;top:344px;width:2px;height:42px;background:#6e6e6e;"></div>
<div id="t63" class="t" style="top:355.75px;font-size:22.5px;line-height:22.5px;color:#ffffff;left:940.50px;width:1200px;text-align:center;-webkit-text-stroke:0.5px #fff;transform:scaleX(0.88);"><span>L</span></div>
<div class="b" style="left:1474px;top:344px;width:2px;height:42px;background:#6e6e6e;"></div>
<div id="t64" class="t" style="top:355.75px;font-size:22.5px;line-height:22.5px;color:#ffffff;left:1070.50px;width:1200px;text-align:center;-webkit-text-stroke:0.5px #fff;transform:scaleX(0.88);"><span>M</span></div>
<div class="b" style="left:1604px;top:344px;width:2px;height:42px;background:#6e6e6e;"></div>
<div id="t65" class="t" style="top:355.75px;font-size:22.5px;line-height:22.5px;color:#ffffff;left:1200.50px;width:1200px;text-align:center;-webkit-text-stroke:0.5px #fff;transform:scaleX(0.88);"><span>N</span></div>
<div class="b" style="left:1734px;top:344px;width:2px;height:42px;background:#6e6e6e;"></div>
<div id="t66" class="t" style="top:355.75px;font-size:22.5px;line-height:22.5px;color:#ffffff;left:1330.50px;width:1200px;text-align:center;-webkit-text-stroke:0.5px #fff;transform:scaleX(0.88);"><span>O</span></div>
<div class="b" style="left:1864px;top:344px;width:2px;height:42px;background:#6e6e6e;"></div>
<div id="t67" class="t" style="top:355.75px;font-size:22.5px;line-height:22.5px;color:#ffffff;left:1460.50px;width:1200px;text-align:center;-webkit-text-stroke:0.5px #fff;transform:scaleX(0.88);"><span>P</span></div>
<div class="b" style="left:1994px;top:344px;width:2px;height:42px;background:#6e6e6e;"></div>
<div id="t68" class="t" style="top:355.75px;font-size:22.5px;line-height:22.5px;color:#ffffff;left:1590.50px;width:1200px;text-align:center;-webkit-text-stroke:0.5px #fff;transform:scaleX(0.88);"><span>Q</span></div>
<div class="b" style="left:2124px;top:344px;width:2px;height:42px;background:#6e6e6e;"></div>
<div id="t69" class="t" style="top:355.75px;font-size:22.5px;line-height:22.5px;color:#ffffff;left:1720.50px;width:1200px;text-align:center;-webkit-text-stroke:0.5px #fff;transform:scaleX(0.88);"><span>R</span></div>
<div class="b" style="left:2254px;top:344px;width:2px;height:42px;background:#6e6e6e;"></div>
<div id="t70" class="t" style="top:355.75px;font-size:22.5px;line-height:22.5px;color:#ffffff;left:1850.50px;width:1200px;text-align:center;-webkit-text-stroke:0.5px #fff;transform:scaleX(0.88);"><span>S</span></div>
<div class="b" style="left:2384px;top:344px;width:2px;height:42px;background:#6e6e6e;"></div>
<div id="t71" class="t" style="top:355.75px;font-size:22.5px;line-height:22.5px;color:#ffffff;left:1980.50px;width:1200px;text-align:center;-webkit-text-stroke:0.5px #fff;transform:scaleX(0.88);"><span>T</span></div>
<div class="b" style="left:2514px;top:344px;width:2px;height:42px;background:#6e6e6e;"></div>
<div id="t72" class="t" style="top:355.75px;font-size:22.5px;line-height:22.5px;color:#ffffff;left:2110.50px;width:1200px;text-align:center;-webkit-text-stroke:0.5px #fff;transform:scaleX(0.88);"><span>U</span></div>
<div class="b" style="left:2644px;top:344px;width:2px;height:42px;background:#6e6e6e;"></div>
<div id="t73" class="t" style="top:355.75px;font-size:22.5px;line-height:22.5px;color:#ffffff;left:2240.50px;width:1200px;text-align:center;-webkit-text-stroke:0.5px #fff;transform:scaleX(0.88);"><span>V</span></div>
<div class="b" style="left:2774px;top:344px;width:2px;height:42px;background:#6e6e6e;"></div>
<div class="b" style="left:44px;top:344px;width:2px;height:42px;background:#b4b4b4;"></div>
<div class="b" style="left:0px;top:386px;width:2880px;height:1314px;background:#fff;"></div>
<div class="b" style="left:46px;top:386px;width:2834px;height:1314px;background:repeating-linear-gradient(to right, transparent 0, transparent 128px, #d6d6d6 128px, #d6d6d6 130px);background-position:0 0;"></div>
<div class="b" style="left:46px;top:386px;width:2834px;height:1314px;background:repeating-linear-gradient(to bottom, #d6d6d6 0, #d6d6d6 2px, transparent 2px, transparent 32px);"></div>
<div class="b" style="left:0px;top:386px;width:44px;height:1314px;background:#151515;"></div>
<div class="b" style="left:44px;top:386px;width:2px;height:1314px;background:#bdbdbd;"></div>
<div class="b" style="left:0px;top:418px;width:44px;height:2px;background:#4a4a4a;"></div>
<div class="b" style="left:0px;top:450px;width:44px;height:2px;background:#4a4a4a;"></div>
<div class="b" style="left:0px;top:482px;width:44px;height:2px;background:#4a4a4a;"></div>
<div class="b" style="left:0px;top:514px;width:44px;height:2px;background:#4a4a4a;"></div>
<div class="b" style="left:0px;top:706px;width:44px;height:2px;background:#4a4a4a;"></div>
<div class="b" style="left:0px;top:738px;width:44px;height:2px;background:#4a4a4a;"></div>
<div class="b" style="left:0px;top:770px;width:44px;height:2px;background:#4a4a4a;"></div>
<div class="b" style="left:0px;top:802px;width:44px;height:2px;background:#4a4a4a;"></div>
<div class="b" style="left:0px;top:834px;width:44px;height:2px;background:#4a4a4a;"></div>
<div class="b" style="left:0px;top:866px;width:44px;height:2px;background:#4a4a4a;"></div>
<div class="b" style="left:0px;top:898px;width:44px;height:2px;background:#4a4a4a;"></div>
<div class="b" style="left:0px;top:930px;width:44px;height:2px;background:#4a4a4a;"></div>
<div class="b" style="left:0px;top:962px;width:44px;height:2px;background:#4a4a4a;"></div>
<div class="b" style="left:0px;top:994px;width:44px;height:2px;background:#4a4a4a;"></div>
<div class="b" style="left:0px;top:1026px;width:44px;height:2px;background:#4a4a4a;"></div>
<div class="b" style="left:0px;top:1058px;width:44px;height:2px;background:#4a4a4a;"></div>
<div class="b" style="left:0px;top:1090px;width:44px;height:2px;background:#4a4a4a;"></div>
<div class="b" style="left:0px;top:1122px;width:44px;height:2px;background:#4a4a4a;"></div>
<div class="b" style="left:0px;top:1154px;width:44px;height:2px;background:#4a4a4a;"></div>
<div class="b" style="left:0px;top:1186px;width:44px;height:2px;background:#4a4a4a;"></div>
<div class="b" style="left:0px;top:1218px;width:44px;height:2px;background:#4a4a4a;"></div>
<div class="b" style="left:0px;top:1250px;width:44px;height:2px;background:#4a4a4a;"></div>
<div class="b" style="left:0px;top:1282px;width:44px;height:2px;background:#4a4a4a;"></div>
<div class="b" style="left:0px;top:1314px;width:44px;height:2px;background:#4a4a4a;"></div>
<div class="b" style="left:0px;top:1346px;width:44px;height:2px;background:#4a4a4a;"></div>
<div class="b" style="left:0px;top:1378px;width:44px;height:2px;background:#4a4a4a;"></div>
<div class="b" style="left:0px;top:1410px;width:44px;height:2px;background:#4a4a4a;"></div>
<div class="b" style="left:0px;top:1442px;width:44px;height:2px;background:#4a4a4a;"></div>
<div class="b" style="left:0px;top:1474px;width:44px;height:2px;background:#4a4a4a;"></div>
<div class="b" style="left:0px;top:1506px;width:44px;height:2px;background:#4a4a4a;"></div>
<div class="b" style="left:0px;top:1538px;width:44px;height:2px;background:#4a4a4a;"></div>
<div class="b" style="left:0px;top:1570px;width:44px;height:2px;background:#4a4a4a;"></div>
<div class="b" style="left:0px;top:1602px;width:44px;height:2px;background:#4a4a4a;"></div>
<div class="b" style="left:0px;top:1634px;width:44px;height:2px;background:#4a4a4a;"></div>
<div class="b" style="left:0px;top:1666px;width:44px;height:2px;background:#4a4a4a;"></div>
<div class="b" style="left:0px;top:515px;width:42px;height:192px;background:#545454;"></div>
<div class="b" style="left:42px;top:514px;width:4px;height:194px;background:#21734a;"></div>
<div id="t74" class="t" style="top:394.20px;font-size:21.5px;line-height:21.5px;color:#ffffff;left:-577.50px;width:1200px;text-align:center;-webkit-text-stroke:0.5px #fff;"><span>1</span></div>
<div id="t75" class="t" style="top:426.20px;font-size:21.5px;line-height:21.5px;color:#ffffff;left:-577.50px;width:1200px;text-align:center;-webkit-text-stroke:0.5px #fff;"><span>2</span></div>
<div id="t76" class="t" style="top:458.20px;font-size:21.5px;line-height:21.5px;color:#ffffff;left:-577.50px;width:1200px;text-align:center;-webkit-text-stroke:0.5px #fff;"><span>3</span></div>
<div id="t77" class="t" style="top:490.20px;font-size:21.5px;line-height:21.5px;color:#ffffff;left:-577.50px;width:1200px;text-align:center;-webkit-text-stroke:0.5px #fff;"><span>4</span></div>
<div id="t78" class="t" style="top:522.20px;font-size:21.5px;line-height:21.5px;color:#ffffff;left:-577.50px;width:1200px;text-align:center;-webkit-text-stroke:0.5px #fff;"><span>5</span></div>
<div id="t79" class="t" style="top:554.20px;font-size:21.5px;line-height:21.5px;color:#ffffff;left:-577.50px;width:1200px;text-align:center;-webkit-text-stroke:0.5px #fff;"><span>6</span></div>
<div id="t80" class="t" style="top:586.20px;font-size:21.5px;line-height:21.5px;color:#ffffff;left:-577.50px;width:1200px;text-align:center;-webkit-text-stroke:0.5px #fff;"><span>7</span></div>
<div id="t81" class="t" style="top:618.20px;font-size:21.5px;line-height:21.5px;color:#ffffff;left:-577.50px;width:1200px;text-align:center;-webkit-text-stroke:0.5px #fff;"><span>8</span></div>
<div id="t82" class="t" style="top:650.20px;font-size:21.5px;line-height:21.5px;color:#ffffff;left:-577.50px;width:1200px;text-align:center;-webkit-text-stroke:0.5px #fff;"><span>9</span></div>
<div id="t83" class="t" style="top:682.20px;font-size:21.5px;line-height:21.5px;color:#ffffff;left:-577.50px;width:1200px;text-align:center;-webkit-text-stroke:0.5px #fff;letter-spacing:-0.8px;"><span>10</span></div>
<div id="t84" class="t" style="top:714.20px;font-size:21.5px;line-height:21.5px;color:#ffffff;left:-577.50px;width:1200px;text-align:center;-webkit-text-stroke:0.5px #fff;letter-spacing:-0.8px;"><span>11</span></div>
<div id="t85" class="t" style="top:746.20px;font-size:21.5px;line-height:21.5px;color:#ffffff;left:-577.50px;width:1200px;text-align:center;-webkit-text-stroke:0.5px #fff;letter-spacing:-0.8px;"><span>12</span></div>
<div id="t86" class="t" style="top:778.20px;font-size:21.5px;line-height:21.5px;color:#ffffff;left:-577.50px;width:1200px;text-align:center;-webkit-text-stroke:0.5px #fff;letter-spacing:-0.8px;"><span>13</span></div>
<div id="t87" class="t" style="top:810.20px;font-size:21.5px;line-height:21.5px;color:#ffffff;left:-577.50px;width:1200px;text-align:center;-webkit-text-stroke:0.5px #fff;letter-spacing:-0.8px;"><span>14</span></div>
<div id="t88" class="t" style="top:842.20px;font-size:21.5px;line-height:21.5px;color:#ffffff;left:-577.50px;width:1200px;text-align:center;-webkit-text-stroke:0.5px #fff;letter-spacing:-0.8px;"><span>15</span></div>
<div id="t89" class="t" style="top:874.20px;font-size:21.5px;line-height:21.5px;color:#ffffff;left:-577.50px;width:1200px;text-align:center;-webkit-text-stroke:0.5px #fff;letter-spacing:-0.8px;"><span>16</span></div>
<div id="t90" class="t" style="top:906.20px;font-size:21.5px;line-height:21.5px;color:#ffffff;left:-577.50px;width:1200px;text-align:center;-webkit-text-stroke:0.5px #fff;letter-spacing:-0.8px;"><span>17</span></div>
<div id="t91" class="t" style="top:938.20px;font-size:21.5px;line-height:21.5px;color:#ffffff;left:-577.50px;width:1200px;text-align:center;-webkit-text-stroke:0.5px #fff;letter-spacing:-0.8px;"><span>18</span></div>
<div id="t92" class="t" style="top:970.20px;font-size:21.5px;line-height:21.5px;color:#ffffff;left:-577.50px;width:1200px;text-align:center;-webkit-text-stroke:0.5px #fff;letter-spacing:-0.8px;"><span>19</span></div>
<div id="t93" class="t" style="top:1002.20px;font-size:21.5px;line-height:21.5px;color:#ffffff;left:-577.50px;width:1200px;text-align:center;-webkit-text-stroke:0.5px #fff;letter-spacing:-0.8px;"><span>20</span></div>
<div id="t94" class="t" style="top:1034.20px;font-size:21.5px;line-height:21.5px;color:#ffffff;left:-577.50px;width:1200px;text-align:center;-webkit-text-stroke:0.5px #fff;letter-spacing:-0.8px;"><span>21</span></div>
<div id="t95" class="t" style="top:1066.20px;font-size:21.5px;line-height:21.5px;color:#ffffff;left:-577.50px;width:1200px;text-align:center;-webkit-text-stroke:0.5px #fff;letter-spacing:-0.8px;"><span>22</span></div>
<div id="t96" class="t" style="top:1098.20px;font-size:21.5px;line-height:21.5px;color:#ffffff;left:-577.50px;width:1200px;text-align:center;-webkit-text-stroke:0.5px #fff;letter-spacing:-0.8px;"><span>23</span></div>
<div id="t97" class="t" style="top:1130.20px;font-size:21.5px;line-height:21.5px;color:#ffffff;left:-577.50px;width:1200px;text-align:center;-webkit-text-stroke:0.5px #fff;letter-spacing:-0.8px;"><span>24</span></div>
<div id="t98" class="t" style="top:1162.20px;font-size:21.5px;line-height:21.5px;color:#ffffff;left:-577.50px;width:1200px;text-align:center;-webkit-text-stroke:0.5px #fff;letter-spacing:-0.8px;"><span>25</span></div>
<div id="t99" class="t" style="top:1194.20px;font-size:21.5px;line-height:21.5px;color:#ffffff;left:-577.50px;width:1200px;text-align:center;-webkit-text-stroke:0.5px #fff;letter-spacing:-0.8px;"><span>26</span></div>
<div id="t100" class="t" style="top:1226.20px;font-size:21.5px;line-height:21.5px;color:#ffffff;left:-577.50px;width:1200px;text-align:center;-webkit-text-stroke:0.5px #fff;letter-spacing:-0.8px;"><span>27</span></div>
<div id="t101" class="t" style="top:1258.20px;font-size:21.5px;line-height:21.5px;color:#ffffff;left:-577.50px;width:1200px;text-align:center;-webkit-text-stroke:0.5px #fff;letter-spacing:-0.8px;"><span>28</span></div>
<div id="t102" class="t" style="top:1290.20px;font-size:21.5px;line-height:21.5px;color:#ffffff;left:-577.50px;width:1200px;text-align:center;-webkit-text-stroke:0.5px #fff;letter-spacing:-0.8px;"><span>29</span></div>
<div id="t103" class="t" style="top:1322.20px;font-size:21.5px;line-height:21.5px;color:#ffffff;left:-577.50px;width:1200px;text-align:center;-webkit-text-stroke:0.5px #fff;letter-spacing:-0.8px;"><span>30</span></div>
<div id="t104" class="t" style="top:1354.20px;font-size:21.5px;line-height:21.5px;color:#ffffff;left:-577.50px;width:1200px;text-align:center;-webkit-text-stroke:0.5px #fff;letter-spacing:-0.8px;"><span>31</span></div>
<div id="t105" class="t" style="top:1386.20px;font-size:21.5px;line-height:21.5px;color:#ffffff;left:-577.50px;width:1200px;text-align:center;-webkit-text-stroke:0.5px #fff;letter-spacing:-0.8px;"><span>32</span></div>
<div id="t106" class="t" style="top:1418.20px;font-size:21.5px;line-height:21.5px;color:#ffffff;left:-577.50px;width:1200px;text-align:center;-webkit-text-stroke:0.5px #fff;letter-spacing:-0.8px;"><span>33</span></div>
<div id="t107" class="t" style="top:1450.20px;font-size:21.5px;line-height:21.5px;color:#ffffff;left:-577.50px;width:1200px;text-align:center;-webkit-text-stroke:0.5px #fff;letter-spacing:-0.8px;"><span>34</span></div>
<div id="t108" class="t" style="top:1482.20px;font-size:21.5px;line-height:21.5px;color:#ffffff;left:-577.50px;width:1200px;text-align:center;-webkit-text-stroke:0.5px #fff;letter-spacing:-0.8px;"><span>35</span></div>
<div id="t109" class="t" style="top:1514.20px;font-size:21.5px;line-height:21.5px;color:#ffffff;left:-577.50px;width:1200px;text-align:center;-webkit-text-stroke:0.5px #fff;letter-spacing:-0.8px;"><span>36</span></div>
<div id="t110" class="t" style="top:1546.20px;font-size:21.5px;line-height:21.5px;color:#ffffff;left:-577.50px;width:1200px;text-align:center;-webkit-text-stroke:0.5px #fff;letter-spacing:-0.8px;"><span>37</span></div>
<div id="t111" class="t" style="top:1578.20px;font-size:21.5px;line-height:21.5px;color:#ffffff;left:-577.50px;width:1200px;text-align:center;-webkit-text-stroke:0.5px #fff;letter-spacing:-0.8px;"><span>38</span></div>
<div id="t112" class="t" style="top:1610.20px;font-size:21.5px;line-height:21.5px;color:#ffffff;left:-577.50px;width:1200px;text-align:center;-webkit-text-stroke:0.5px #fff;letter-spacing:-0.8px;"><span>39</span></div>
<div id="t113" class="t" style="top:1642.20px;font-size:21.5px;line-height:21.5px;color:#ffffff;left:-577.50px;width:1200px;text-align:center;-webkit-text-stroke:0.5px #fff;letter-spacing:-0.8px;"><span>40</span></div>
<div id="t114" class="t" style="top:1674.20px;font-size:21.5px;line-height:21.5px;color:#ffffff;left:-577.50px;width:1200px;text-align:center;-webkit-text-stroke:0.5px #fff;letter-spacing:-0.8px;"><span>41</span></div>
<div class="b" style="left:435px;top:384px;width:261px;height:4px;background:#21734a;"></div>
<div class="b" style="left:438px;top:548px;width:128px;height:158px;background:#c9c9c9;"></div>
<div class="b" style="left:566px;top:518px;width:126px;height:186px;background:#c9c9c9;"></div>
<div class="b" style="left:438px;top:546px;width:254px;height:2px;background:#a9a9a9;"></div>
<div class="b" style="left:438px;top:578px;width:254px;height:2px;background:#a9a9a9;"></div>
<div class="b" style="left:566px;top:610px;width:126px;height:2px;background:#a9a9a9;"></div>
<div class="b" style="left:438px;top:642px;width:254px;height:2px;background:#a9a9a9;"></div>
<div class="b" style="left:438px;top:674px;width:254px;height:2px;background:#a9a9a9;"></div>
<div class="b" style="left:564px;top:518px;width:2px;height:60px;background:#a9a9a9;"></div>
<div class="b" style="left:564px;top:644px;width:2px;height:60px;background:#a9a9a9;"></div>
<div class="b" style="left:438px;top:578px;width:128px;height:66px;background:#cdca2b;"></div>
<div class="b" style="left:432px;top:512px;width:266px;height:198px;background:transparent;border:4px solid #21734a;box-sizing:border-box;"></div>
<div class="b" style="left:436px;top:516px;width:258px;height:190px;background:transparent;border:2px solid #fff;box-sizing:border-box;"></div>
<div class="b" style="left:688px;top:700px;width:12px;height:12px;background:#21734a;border-left:2px solid #fff;border-top:2px solid #fff;box-sizing:border-box;"></div>
<div id="t115" class="t" style="top:523.00px;font-size:21.5px;line-height:21.5px;color:#000;letter-spacing:0.190px;left:441.00px;"><span>Napoli</span></div>
<div id="t116" class="t" style="top:523.00px;font-size:21.5px;line-height:21.5px;color:#000;right:2190.60px;"><span>1</span></div>
<div id="t117" class="t" style="top:555.00px;font-size:21.5px;line-height:21.5px;color:#000;letter-spacing:-0.010px;left:441.00px;"><span>Messina</span></div>
<div id="t118" class="t" style="top:555.00px;font-size:21.5px;line-height:21.5px;color:#000;right:2190.60px;"><span>1</span></div>
<div id="t119" class="t" style="top:587.00px;font-size:21.5px;line-height:21.5px;color:#000;letter-spacing:-0.531px;left:441.00px;"><span>Roma</span></div>
<div id="t120" class="t" style="top:587.00px;font-size:21.5px;line-height:21.5px;color:#000;right:2190.60px;"><span>2</span></div>
<div id="t121" class="t" style="top:619.00px;font-size:21.5px;line-height:21.5px;color:#000;letter-spacing:0.270px;left:441.00px;"><span>Bergamo</span></div>
<div id="t122" class="t" style="top:619.00px;font-size:21.5px;line-height:21.5px;color:#000;right:2190.60px;"><span>2</span></div>
<div id="t123" class="t" style="top:651.00px;font-size:21.5px;line-height:21.5px;color:#d40000;letter-spacing:0.755px;left:441.00px;"><span>Milano</span></div>
<div id="t124" class="t" style="top:651.00px;font-size:21.5px;line-height:21.5px;color:#000;right:2190.60px;"><span>3</span></div>
<div id="t125" class="t" style="top:683.00px;font-size:21.5px;line-height:21.5px;color:#d40000;letter-spacing:-0.326px;left:441.00px;"><span>Catania</span></div>
<div id="t126" class="t" style="top:683.00px;font-size:21.5px;line-height:21.5px;color:#000;right:2190.60px;"><span>3</span></div>
<svg class="b" style="left:568px;top:529px;" width="24" height="16" viewBox="0 0 24 16" fill="none"><path d="M2.4 2 H21.6 L12 13 Z" fill="#d9585c" stroke="#b5474b" stroke-width="1.2" stroke-linejoin="round"/></svg>
<svg class="b" style="left:568px;top:561px;" width="24" height="16" viewBox="0 0 24 16" fill="none"><path d="M2.4 2 H21.6 L12 13 Z" fill="#d9585c" stroke="#b5474b" stroke-width="1.2" stroke-linejoin="round"/></svg>
<svg class="b" style="left:567px;top:593px;" width="24" height="8" viewBox="0 0 24 8" fill="none"><rect x="1.2" y="1.2" width="21.6" height="5.6" rx="1.4" fill="#eaa63a" stroke="#d99028" stroke-width="1"/></svg>
<svg class="b" style="left:567px;top:625px;" width="24" height="8" viewBox="0 0 24 8" fill="none"><rect x="1.2" y="1.2" width="21.6" height="5.6" rx="1.4" fill="#eaa63a" stroke="#d99028" stroke-width="1"/></svg>
<svg class="b" style="left:568px;top:652px;" width="24" height="14" viewBox="0 0 24 14" fill="none"><path d="M2.4 11.8 H21.6 L12 2.4 Z" fill="#5cae78" stroke="#458f5f" stroke-width="1.2" stroke-linejoin="round"/></svg>
<svg class="b" style="left:568px;top:684px;" width="24" height="14" viewBox="0 0 24 14" fill="none"><path d="M2.4 11.8 H21.6 L12 2.4 Z" fill="#5cae78" stroke="#458f5f" stroke-width="1.2" stroke-linejoin="round"/></svg>
<!-- part4 -->
<div class="b" style="left:0px;top:1700px;width:2880px;height:54px;background:#323232;"></div>
<div class="b" style="left:0px;top:1700px;width:2880px;height:2px;background:#222;"></div>
<div class="b" style="left:0px;top:1702px;width:2880px;height:2px;background:#3e3e3e;"></div>
<div class="b" style="left:0px;top:1753px;width:2880px;height:2px;background:#111;"></div>
<div class="b" style="left:0px;top:1755px;width:2880px;height:45px;background:linear-gradient(#4a4a4a,#3d3d3d);"></div>
<svg class="b" style="left:26px;top:1716px;" width="22" height="28" viewBox="0 0 22 28" fill="none"><path d="M17.4 4.8 V23.4 L4.6 14 Z" fill="#5e5e5e" stroke="#5e5e5e" stroke-width="2" stroke-linejoin="round"/></svg>
<svg class="b" style="left:73px;top:1716px;" width="22" height="28" viewBox="0 0 22 28" fill="none"><path d="M4.6 4.8 V23.4 L17.4 14 Z" fill="#5e5e5e" stroke="#5e5e5e" stroke-width="2" stroke-linejoin="round"/></svg>
<div class="b" style="left:122px;top:1700px;width:156.5px;height:45.5px;background:#ffffff;border-radius:0 0 6px 6px;box-shadow:0 1px 0 1px #7a7a7a;"></div>
<div id="t127" class="t" style="top:1716.51px;font-size:23.5px;line-height:23.5px;color:#21794b;font-weight:700;letter-spacing:-0.579px;left:159.00px;"><span>Foglio1</span></div>
<svg class="b" style="left:304px;top:1714px;" width="28" height="28" viewBox="0 0 28 28" fill="none"><path d="M14 4 V24 M4 14 H24" stroke="#c6c6c6" stroke-width="4"/></svg>
<div class="b" style="left:354px;top:1705px;width:2px;height:40px;background:#555;"></div>
<div id="t128" class="t" style="top:1766.71px;font-size:23.5px;line-height:23.5px;color:#dcdcdc;letter-spacing:0.573px;left:49.60px;"><span>Pronto</span></div>
<svg class="b" style="left:160px;top:1760px;" width="34" height="34" viewBox="0 0 34 34" fill="none"><circle cx="14.6" cy="6.4" r="3.4" stroke="#dcdcdc" stroke-width="2"/><path d="M3.4 10.4 C7 13 10 13.6 14.6 13.6 C19.2 13.6 22.2 13 25.8 10.4 M11 13.6 C11 19 9 24 5.6 28.6 M18.2 13.6 C18.2 17 18.8 19.6 20.4 22.4 M14.6 19.6 L10.6 28.8" stroke="#dcdcdc" stroke-width="2" stroke-linecap="round"/><path d="M19.6 21 L31 32 M31 21 L19.6 32" stroke="#dcdcdc" stroke-width="2" stroke-linecap="round"/></svg>
<div id="t129" class="t" style="top:1766.71px;font-size:23.5px;line-height:23.5px;color:#dcdcdc;letter-spacing:0.827px;left:199.00px;"><span>Accessibilità: verifica</span></div>
<div class="b" style="left:2242px;top:1755px;width:74px;height:45px;background:#5a5a5a;"></div>
<svg class="b" style="left:2263px;top:1762px;" width="32" height="32" viewBox="0 0 32 32" fill="none"><rect x="3.6" y="3.4" width="24.4" height="24.4" stroke="#ececec" stroke-width="2.2"/><path d="M3.6 11.6 H28 M3.6 19.6 H28 M11.8 3.4 V27.8 M19.8 3.4 V27.8" stroke="#ececec" stroke-width="2.2"/></svg>
<svg class="b" style="left:2335px;top:1762px;" width="32" height="32" viewBox="0 0 32 32" fill="none"><rect x="3.2" y="3.4" width="25.6" height="24.4" stroke="#ececec" stroke-width="2.2"/><rect x="9.4" y="8.6" width="13.2" height="14" stroke="#ececec" stroke-width="2"/><path d="M12.6 13 H19.4 M12.6 17.6 H19.4" stroke="#ececec" stroke-width="2"/></svg>
<svg class="b" style="left:2405px;top:1762px;" width="34" height="32" viewBox="0 0 34 32" fill="none"><rect x="3.8" y="3.4" width="26.4" height="24.4" stroke="#ececec" stroke-width="2.2"/><path d="M3.8 16.4 H21.4 V3.4 M12.6 3.4 V16.4" stroke="#ececec" stroke-width="2.2"/></svg>
<div class="b" style="left:2473.5px;top:1775px;width:17px;height:5px;background:#f0f0f0;border-radius:1px;"></div>
<div class="b" style="left:2504px;top:1773px;width:200px;height:9px;background:#7c7c7c;border-radius:5px;"></div>
<div class="b" style="left:2588px;top:1761px;width:32px;height:32px;background:#a0a0a0;border-radius:50%;"></div>
<div class="b" style="left:2718px;top:1775px;width:17px;height:5px;background:#f0f0f0;"></div>
<div class="b" style="left:2724px;top:1769px;width:5px;height:17px;background:#f0f0f0;"></div>
<div id="t130" class="t" style="top:1766.71px;font-size:23.5px;line-height:23.5px;color:#dcdcdc;letter-spacing:0.685px;left:2768.40px;"><span>100%</span></div>
<!-- part5 -->
<div class="b" style="left:802px;top:348px;width:1400px;height:644px;background:#382826;border-radius:20px;box-shadow:0 0 0 1px rgba(0,0,0,.6), 0 10px 36px rgba(0,0,0,.25);"></div>
<div class="b" style="left:802px;top:348px;width:1400px;height:38px;background:#433735;border-radius:20px 20px 0 0;"></div>
<div class="b" style="left:802px;top:385.5px;width:1400px;height:1.5px;background:#1a1110;"></div>
<div class="b" style="left:803px;top:349px;width:1398px;height:642px;background:transparent;border-radius:19px;border:1px solid rgba(255,255,255,.16);box-sizing:border-box;"></div>
<div class="b" style="left:812px;top:358px;width:18px;height:18px;background:#62585a;border-radius:50%;"></div>
<div class="b" style="left:842px;top:358px;width:18px;height:18px;background:#62585a;border-radius:50%;"></div>
<div class="b" style="left:872px;top:358px;width:18px;height:18px;background:#2cc640;border-radius:50%;"></div>
<div id="t131" class="t" style="top:355.98px;font-size:22px;line-height:22px;color:#b5adac;letter-spacing:0.355px;left:900.18px;width:1200px;text-align:center;-webkit-text-stroke:0.3px currentColor;"><span>Ordina</span></div>
<div id="t132" class="t" style="top:430.19px;font-size:26px;line-height:26px;color:#e2dedd;letter-spacing:0.417px;left:842.70px;"><span>Aggiungi livelli in base a cui ordinare:</span></div>
<div class="b" style="left:1772px;top:428px;width:28px;height:28px;background:linear-gradient(#6c605e,#584c4a);border-radius:7px;box-shadow:0 0 0 1px rgba(0,0,0,.25) inset;"></div>
<div id="t133" class="t" style="top:430.19px;font-size:26px;line-height:26px;color:#e2dedd;letter-spacing:0.615px;left:1812.50px;"><span>L'elenco include intestazioni</span></div>
<div class="b" style="left:842px;top:468px;width:1320px;height:364px;background:#2e1e1c;"></div>
<div class="b" style="left:842px;top:522px;width:1320px;height:2px;background:#493b39;"></div>
<div class="b" style="left:1082px;top:480px;width:2px;height:32px;background:#564a48;"></div>
<div id="t134" class="t" style="top:485.58px;font-size:22px;line-height:22px;color:#f3f1f0;letter-spacing:0.467px;left:1094.00px;-webkit-text-stroke:0.3px currentColor;"><span>Colonna</span></div>
<div class="b" style="left:1921px;top:480px;width:2px;height:32px;background:#564a48;"></div>
<div id="t135" class="t" style="top:485.58px;font-size:22px;line-height:22px;color:#f3f1f0;letter-spacing:0.939px;left:1623.60px;-webkit-text-stroke:0.3px currentColor;"><span>Ordine</span></div>
<div id="t136" class="t" style="top:485.58px;font-size:22px;line-height:22px;color:#f3f1f0;letter-spacing:0.625px;left:1932.00px;-webkit-text-stroke:0.3px currentColor;"><span>Colore/icona</span></div>
<div class="b" style="left:862px;top:544px;width:1280px;height:56px;background:#006729;border-radius:12px;"></div>
<div id="t137" class="t" style="top:560.39px;font-size:26px;line-height:26px;color:#ffffff;letter-spacing:0.458px;left:878.50px;"><span>Ordina per</span></div>
<div id="t138" class="t" style="top:560.39px;font-size:26px;line-height:26px;color:#dfeae1;letter-spacing:0.123px;left:1092.50px;"><span>Colonna D</span></div>
<div id="t139" class="t" style="top:560.39px;font-size:26px;line-height:26px;color:#dfeae1;letter-spacing:0.644px;left:1517.00px;"><span>Dall'alto in basso</span></div>
<svg class="b" style="left:1898px;top:560px;" width="16" height="25" viewBox="0 0 16 25" fill="none"><path d="M2.6 8.6 L8 3 L13.4 8.6 M2.6 16 L8 21.6 L13.4 16" stroke="#cfe3d4" stroke-width="2.6" stroke-linecap="round" stroke-linejoin="round"/></svg>
<div id="t140" class="t" style="top:560.39px;font-size:26px;line-height:26px;color:#55a273;letter-spacing:-0.205px;left:1931.00px;"><span>Nessuna ico...</span></div>
<svg class="b" style="left:2110px;top:560px;" width="16" height="25" viewBox="0 0 16 25" fill="none"><path d="M2.6 8.6 L8 3 L13.4 8.6 M2.6 16 L8 21.6 L13.4 16" stroke="#4a9a68" stroke-width="2.6" stroke-linecap="round" stroke-linejoin="round"/></svg>
<div class="b" style="left:842px;top:848px;width:184px;height:48px;background:#4e4240;border:2px solid #6b5f5d;box-sizing:border-box;"></div>
<div class="b" style="left:888px;top:848px;width:2px;height:48px;background:#6b5f5d;"></div>
<div class="b" style="left:934px;top:848px;width:2px;height:48px;background:#6b5f5d;"></div>
<svg class="b" style="left:854px;top:860px;" width="26" height="24" viewBox="0 0 26 24" fill="none"><path d="M12.6 2 V22 M2.6 12 H22.6" stroke="#e6e2e1" stroke-width="2.2"/></svg>
<svg class="b" style="left:899px;top:860px;" width="26" height="24" viewBox="0 0 26 24" fill="none"><path d="M2.6 12 H24.4" stroke="#e6e2e1" stroke-width="2.2"/></svg>
<div id="t141" class="t" style="top:858.99px;font-size:26px;line-height:26px;color:#e2dedd;letter-spacing:0.125px;left:945.40px;"><span>Copia</span></div>
<div class="b" style="left:1686px;top:912px;width:156px;height:40px;background:#695d5b;border-radius:10px;box-shadow:0 1px 0 rgba(255,255,255,.12) inset, 0 1px 2px rgba(0,0,0,.35);"></div>
<div id="t142" class="t" style="top:917.59px;font-size:26px;line-height:26px;color:#f1eeee;letter-spacing:0.323px;left:1707.30px;"><span>Opzioni...</span></div>
<div class="b" style="left:1866px;top:912px;width:130px;height:40px;background:#695d5b;border-radius:10px;box-shadow:0 1px 0 rgba(255,255,255,.12) inset, 0 1px 2px rgba(0,0,0,.35);"></div>
<div id="t143" class="t" style="top:917.59px;font-size:26px;line-height:26px;color:#f1eeee;letter-spacing:0.208px;left:1885.90px;"><span>Annulla</span></div>
<div class="b" style="left:2020px;top:912px;width:142px;height:40px;background:linear-gradient(#1e8350,#1a7848);border-radius:10px;box-shadow:0 1px 0 rgba(255,255,255,.12) inset, 0 1px 2px rgba(0,0,0,.35);"></div>
<div id="t144" class="t" style="top:918.44px;font-size:25px;line-height:25px;color:#f1eeee;letter-spacing:-1.087px;left:2072.50px;"><span>OK</span></div>
<div class="b" style="left:1388px;top:414px;width:274px;height:196px;background:linear-gradient(#382927 0%,#35302a 45%,#2b3424 100%);border-radius:13px;box-shadow:0 0 0 1px rgba(0,0,0,.7), 0 10px 30px rgba(0,0,0,.35), 0 0 0 2px rgba(255,255,255,.22) inset;"></div>
<div class="b" style="left:1398px;top:556px;width:254px;height:44px;background:#1f7048;border-radius:9px;"></div>
<div id="t145" class="t" style="top:433.79px;font-size:26px;line-height:26px;color:#efecea;letter-spacing:0.319px;left:1436.70px;"><span>Valori</span></div>
<div id="t146" class="t" style="top:477.79px;font-size:26px;line-height:26px;color:#efecea;letter-spacing:0.314px;left:1436.70px;"><span>Colore cella</span></div>
<div id="t147" class="t" style="top:521.79px;font-size:26px;line-height:26px;color:#efecea;letter-spacing:0.534px;left:1436.70px;"><span>Colore carattere</span></div>
<div id="t148" class="t" style="top:565.79px;font-size:26px;line-height:26px;color:#efecea;letter-spacing:0.247px;left:1436.70px;"><span>Icona cella</span></div>
<svg class="b" style="left:1404px;top:566px;" width="26" height="26" viewBox="0 0 26 26" fill="none"><path d="M3.8 14.4 L9.4 21 L20.6 4.6" stroke="#efecea" stroke-width="3" stroke-linecap="round" stroke-linejoin="round"/></svg>
</body></html>
